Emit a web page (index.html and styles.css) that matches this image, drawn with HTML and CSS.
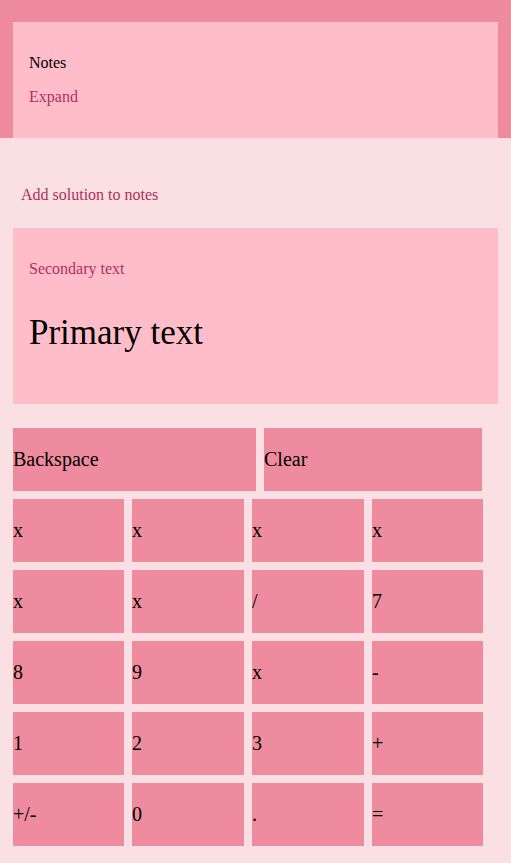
FILE: index.html
```html
<!DOCTYPE html>
<html lang="en">
<head>
<meta charset="utf-8">
<title>Calculator</title>
<link rel="stylesheet" href="styles.css">
</head>
<body>
<header class="header">
  <section class="notes-card">
    <p class="notes-title">Notes</p>
    <p class="link">Expand</p>
  </section>
</header>
<main class="main">
  <div class="add-btn">Add solution to notes</div>
  <section class="display">
    <p class="secondary">Secondary text</p>
    <p class="primary">Primary text</p>
  </section>
  <div class="keypad">
    <div class="top-row">
      <button class="key">Backspace</button>
      <button class="key">Clear</button>
    </div>
    <div class="grid">
      <button class="key">x</button>
      <button class="key">x</button>
      <button class="key">x</button>
      <button class="key">x</button>
      <button class="key">x</button>
      <button class="key">x</button>
      <button class="key">/</button>
      <button class="key">7</button>
      <button class="key">8</button>
      <button class="key">9</button>
      <button class="key">x</button>
      <button class="key">-</button>
      <button class="key">1</button>
      <button class="key">2</button>
      <button class="key">3</button>
      <button class="key">+</button>
      <button class="key">+/-</button>
      <button class="key">0</button>
      <button class="key">.</button>
      <button class="key">=</button>
    </div>
  </div>
</main>
</body>
</html>
```
FILE: styles.css
```css
html, body {
  margin: 0;
  padding: 0;
}
body {
  background: #fadfe3;
  font-family: "Liberation Serif", "Times New Roman", serif;
  font-size: 16px;
  color: #000;
}
.header {
  background: #ee8b9e;
  padding: 22px 13px 0;
}
.notes-card {
  background: #ffbdca;
  padding: 16px;
}
.notes-card p {
  margin: 16px 0;
}
.link {
  color: #b0305a;
}
.main {
  padding: 0 13px 17px;
}
.add-btn {
  margin: 40px 0 16px;
  padding: 8px;
  font-size: 16px;
  color: #b0305a;
}
.display {
  background: #ffbdca;
  padding: 16px;
}
.secondary {
  margin: 16px 0;
  color: #b0305a;
}
.primary {
  margin: 35px 0;
  font-size: 35px;
}
.keypad {
  margin-top: 24px;
  width: 470px;
  display: flex;
  flex-direction: column;
  gap: 8px;
}
.top-row {
  display: grid;
  grid-template-columns: 243px 218px;
  gap: 8px;
}
.grid {
  display: grid;
  grid-template-columns: 111px 112px 112px 111px;
  grid-auto-rows: 63px;
  gap: 8px;
}
.key {
  height: 63px;
  margin: 0;
  padding: 0;
  border: 0;
  background: #ee8b9e;
  font-family: "Liberation Serif", "Times New Roman", serif;
  font-size: 20px;
  color: #000;
  text-align: left;
}
```
